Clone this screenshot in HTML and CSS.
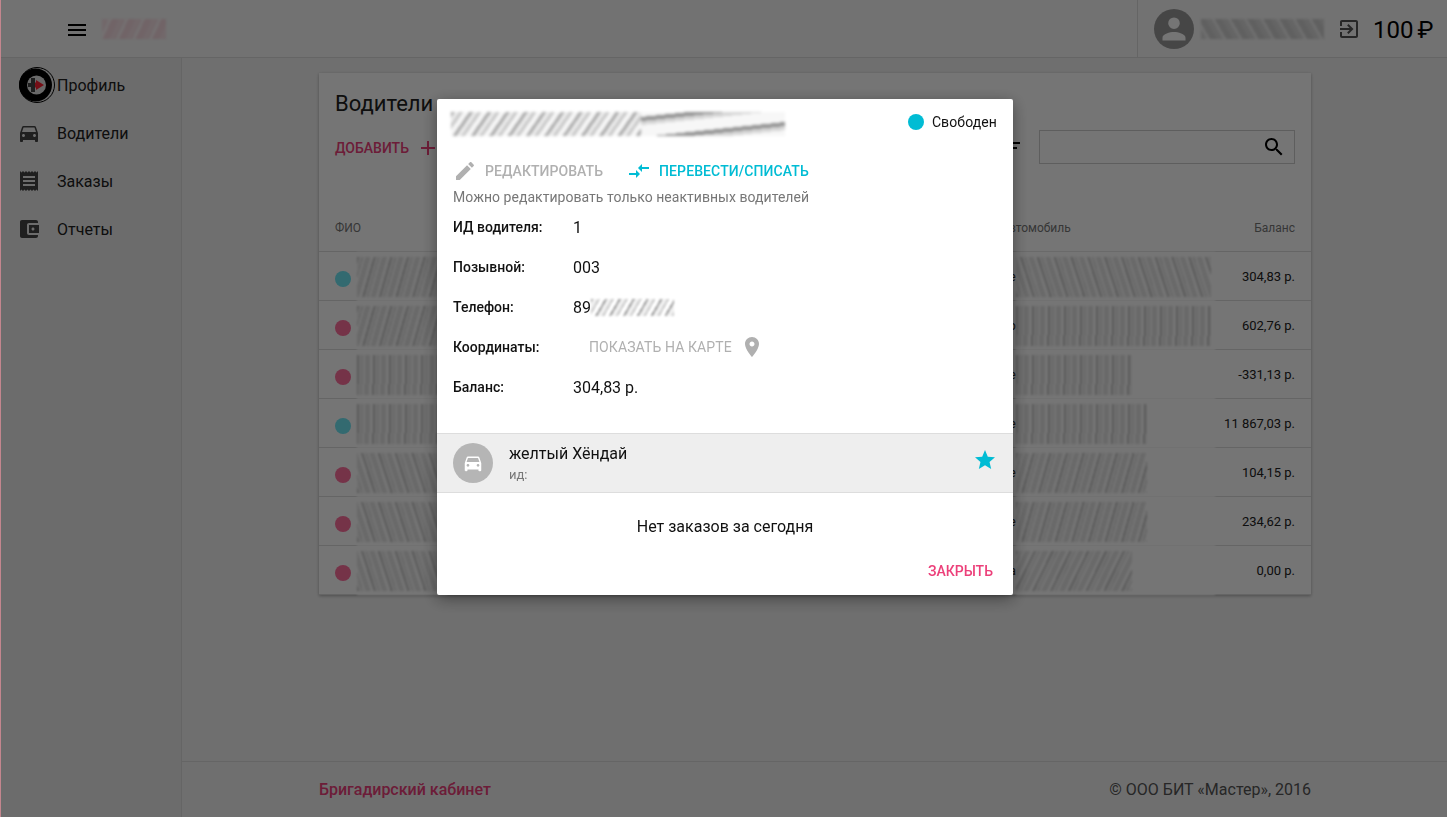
FILE: index.html
```html
<!DOCTYPE html>
<html lang="ru">
<head>
    <meta charset="UTF-8">
    <title>Бригадирский кабинет</title>
    <link rel="stylesheet" href="styles.css">
</head>
<body>
    <div class="page">
        <header class="topbar">
            <div class="topbar-left">
                <svg class="menu-icon" viewBox="0 0 24 24"><path d="M3 18h18v-2H3v2zm0-5h18v-2H3v2zm0-7v2h18V6H3z"/></svg>
                <div class="smear-logo"></div>
            </div>
            <div class="topbar-user">
                <svg class="avatar" viewBox="0 0 40 40"><circle cx="20" cy="20" r="20" fill="#9a9a9a"/><path fill="#fff" d="M20 20a5.800 5.800 0 1 0 0-11.600a5.800 5.800 0 0 0 0 11.600zm0 3c-3.900 0-11.500 1.900-11.500 5.700V31.500h23v-2.800c0-3.800-7.600-5.700-11.500-5.700z"/></svg>
                <div class="smear-user"></div>
                <svg class="exit-icon" viewBox="0 0 24 24"><path d="M10.090 15.590L11.500 17l5-5-5-5-1.410 1.410L12.670 11H3v2h9.670l-2.580 2.590zM19 3H5c-1.110 0-2 .9-2 2v4h2V5h14v14H5v-4H3v4c0 1.100.89 2 2 2h14c1.100 0 2-.9 2-2V5c0-1.100-.9-2-2-2z"/></svg>
                <span class="money">100 ₽</span>
            </div>
        </header>

        <div class="layout">
            <nav class="sidebar">
                <a class="nav-item nav-profile">
                    <svg class="nav-logo" viewBox="0 0 36 36">
                        <circle cx="18" cy="18" r="17.500" fill="none" stroke="#000" stroke-width="1"/>
                        <circle cx="16.500" cy="18" r="16.500" fill="#000"/>
                        <circle cx="17.500" cy="18" r="9.500" fill="#e4e4e4"/>
                        <path fill="#444" d="M12 11h4v14h-4v-5H9v-4h3z"/>
                        <path fill="#ff2030" d="M16 15.500h1V13l8 5-8 5v-2.500h-1z"/>
                    </svg>
                    Профиль
                </a>
                <a class="nav-item">
                    <svg viewBox="0 0 24 24"><path d="M18.920 6.010C18.720 5.420 18.160 5 17.500 5h-11c-.66 0-1.210.42-1.420 1.010L3 12v8c0 .55.45 1 1 1h1c.55 0 1-.45 1-1v-1h12v1c0 .55.45 1 1 1h1c.55 0 1-.45 1-1v-8l-2.080-5.990zM6.500 16c-.83 0-1.500-.67-1.500-1.500S5.670 13 6.500 13s1.500.67 1.500 1.500S7.330 16 6.500 16zm11 0c-.83 0-1.500-.67-1.500-1.500s.67-1.500 1.500-1.500 1.500.67 1.500 1.500-.67 1.500-1.500 1.500zM5 11l1.500-4.500h11L19 11H5z"/></svg>
                    Водители
                </a>
                <a class="nav-item">
                    <svg viewBox="0 0 24 24"><path d="M18 17H6v-2h12v2zm0-4H6v-2h12v2zm0-4H6V7h12v2zM3 22l1.500-1.500L6 22l1.500-1.500L9 22l1.500-1.500L12 22l1.500-1.500L15 22l1.500-1.500L18 22l1.500-1.500L21 22V2l-1.500 1.500L18 2l-1.500 1.500L15 2l-1.500 1.500L12 2l-1.500 1.500L9 2 7.500 3.500 6 2 4.500 3.500 3 2v20z"/></svg>
                    Заказы
                </a>
                <a class="nav-item">
                    <svg viewBox="0 0 24 24"><path d="M21 18v1c0 1.100-.9 2-2 2H5c-1.110 0-2-.9-2-2V5c0-1.100.89-2 2-2h14c1.100 0 2 .9 2 2v1h-9c-1.110 0-2 .9-2 2v8c0 1.100.89 2 2 2h9zm-9-2h10V8H12v8zm4-2.500c-.83 0-1.500-.67-1.500-1.500s.67-1.500 1.500-1.500 1.500.67 1.500 1.500-.67 1.500-1.500 1.500z"/></svg>
                    Отчеты
                </a>
            </nav>

            <div class="content">
                <main class="main">
                    <section class="card">
                        <div class="card-head">
                            <h1>Водители</h1>
                            <div class="card-tools">
                                <a class="add-link">ДОБАВИТЬ
                                    <svg viewBox="0 0 24 24"><path d="M19 13h-6v6h-2v-6H5v-2h6V5h2v6h6v2z"/></svg>
                                </a>
                                <div class="search-group">
                                    <svg class="filter-icon" viewBox="0 0 24 24"><path d="M3 16h6v2H3zM3 6v2h18V6H3zm0 7h15v-2H3v2z"/></svg>
                                    <div class="search-box">
                                        <svg viewBox="0 0 24 24"><path d="M15.500 14h-.79l-.28-.27C15.410 12.590 16 11.110 16 9.500 16 5.910 13.090 3 9.500 3S3 5.910 3 9.500 5.910 16 9.500 16c1.610 0 3.090-.59 4.230-1.570l.27.28v.79l5 4.990L20.490 19l-4.990-5zm-6 0C7.010 14 5 11.990 5 9.500S7.010 5 9.500 5 14 7.010 14 9.500 11.990 14 9.500 14z"/></svg>
                                    </div>
                                </div>
                            </div>
                        </div>
                        <div class="table-head">
                            <span>ФИО</span>
                            <span class="col-car">Автомобиль</span>
                            <span class="col-balance">Баланс</span>
                        </div>
                        <div class="table-row"><i class="dot dot-free"></i><div class="smear smear-name lean-fwd"></div><span class="car-letter">е</span><div class="smear smear-car car-wide lean-back"></div><span class="col-balance">304,83 р.</span></div>
                        <div class="table-row"><i class="dot dot-busy"></i><div class="smear smear-name lean-fwd"></div><span class="car-letter">о</span><div class="smear smear-car car-wide lean-up"></div><span class="col-balance">602,76 р.</span></div>
                        <div class="table-row"><i class="dot dot-busy"></i><div class="smear smear-name lean-up"></div><span class="car-letter">е</span><div class="smear smear-car car-short lean-up"></div><span class="col-balance">-331,13 р.</span></div>
                        <div class="table-row"><i class="dot dot-free"></i><div class="smear smear-name lean-up"></div><span class="car-letter">е</span><div class="smear smear-car car-mid lean-up"></div><span class="col-balance">11 867,03 р.</span></div>
                        <div class="table-row"><i class="dot dot-busy"></i><div class="smear smear-name lean-back"></div><span class="car-letter">е</span><div class="smear smear-car car-mid lean-fwd"></div><span class="col-balance">104,15 р.</span></div>
                        <div class="table-row"><i class="dot dot-busy"></i><div class="smear smear-name lean-back"></div><span class="car-letter">е</span><div class="smear smear-car car-mid lean-fwd"></div><span class="col-balance">234,62 р.</span></div>
                        <div class="table-row"><i class="dot dot-busy"></i><div class="smear smear-name lean-back"></div><span class="car-letter">а</span><div class="smear smear-car car-short lean-far"></div><span class="col-balance">0,00 р.</span></div>
                    </section>
                </main>
                <footer class="footer">
                    <span class="footer-title">Бригадирский кабинет</span>
                    <span>© ООО БИТ «Мастер», 2016</span>
                </footer>
            </div>
        </div>
    </div>

    <div class="overlay"></div>

    <div class="modal">
        <div class="modal-head">
            <div class="smear-title"></div>
            <div class="status"><i class="status-dot"></i>Свободен</div>
        </div>
        <div class="modal-actions">
            <a class="action action-off">
                <svg viewBox="0 0 24 24"><path d="M3 17.250V21h3.750L17.810 9.940l-3.750-3.750L3 17.250zM20.710 7.040c.39-.39.39-1.020 0-1.410l-2.340-2.340c-.39-.39-1.020-.39-1.410 0l-1.830 1.830 3.750 3.750 1.830-1.830z"/></svg>
                РЕДАКТИРОВАТЬ
            </a>
            <a class="action action-on">
                <svg viewBox="0 0 24 24"><path d="M9.010 14H2v2h7.010v3L13 15l-3.990-4v3zm5.980-1v-3H22V8h-7.010V5L11 9l3.990 4z"/></svg>
                ПЕРЕВЕСТИ/СПИСАТЬ
            </a>
        </div>
        <p class="hint">Можно редактировать только неактивных водителей</p>
        <dl class="info">
            <div class="info-row"><dt>ИД водителя:</dt><dd>1</dd></div>
            <div class="info-row"><dt>Позывной:</dt><dd>003</dd></div>
            <div class="info-row"><dt>Телефон:</dt><dd class="phone">89<div class="smear-phone"></div></dd></div>
            <div class="info-row"><dt>Координаты:</dt><dd class="map-link">ПОКАЗАТЬ НА КАРТЕ
                <svg viewBox="0 0 24 24"><path d="M12 2C8.130 2 5 5.130 5 9c0 5.250 7 13 7 13s7-7.750 7-13c0-3.870-3.130-7-7-7zm0 9.500c-1.380 0-2.500-1.120-2.500-2.500s1.120-2.500 2.500-2.500 2.500 1.120 2.500 2.500-1.120 2.500-2.500 2.500z"/></svg>
            </dd></div>
            <div class="info-row"><dt>Баланс:</dt><dd>304,83 р.</dd></div>
        </dl>
        <div class="car-row">
            <div class="car-avatar">
                <svg viewBox="0 0 24 24"><path d="M18.920 6.010C18.720 5.420 18.160 5 17.500 5h-11c-.66 0-1.210.42-1.420 1.010L3 12v8c0 .55.45 1 1 1h1c.55 0 1-.45 1-1v-1h12v1c0 .55.45 1 1 1h1c.55 0 1-.45 1-1v-8l-2.080-5.990zM6.500 16c-.83 0-1.500-.67-1.500-1.500S5.670 13 6.500 13s1.500.67 1.500 1.500S7.330 16 6.500 16zm11 0c-.83 0-1.500-.67-1.500-1.500s.67-1.500 1.500-1.500 1.500.67 1.500 1.500-.67 1.500-1.500 1.500zM5 11l1.500-4.500h11L19 11H5z"/></svg>
            </div>
            <div class="car-text">
                <div class="car-name">желтый Хёндай</div>
                <div class="car-id">ид:</div>
            </div>
            <svg class="star" viewBox="0 0 24 24"><path d="M12 17.270L18.180 21l-1.640-7.030L22 9.240l-7.190-.61L12 2 9.190 8.630 2 9.240l5.460 4.730L5.820 21z"/></svg>
        </div>
        <p class="no-orders">Нет заказов за сегодня</p>
        <div class="modal-foot"><a class="close-btn">ЗАКРЫТЬ</a></div>
    </div>
</body>
</html>
```

FILE: styles.css
```css
* {
    box-sizing: border-box;
}
html, body {
    height: 100%;
}
body {
    margin: 0;
    font-family: Roboto, "Liberation Sans", sans-serif;
    color: #212121;
    background: #f2f2f2;
    overflow: hidden;
}
.page {
    display: flex;
    flex-direction: column;
    height: 817px;
    border-left: 1px solid #c4868e;
}
.overlay {
    position: fixed;
    inset: 0 0 0 1px;
    background: rgba(0, 0, 0, 0.54);
}

/* blurred-out personal data */
.smear {
    --lean: 105deg;
    --smear-w: 100%;
    flex: none;
    align-self: stretch;
    margin-bottom: -1px;
    filter: blur(1px);
    background-color: #fff;
    background-image: repeating-linear-gradient(var(--lean), rgba(0,0,0,.22) 0 2px, rgba(0,0,0,.05) 2px 5px, rgba(0,0,0,.16) 5px 6px, transparent 6px 8px, rgba(0,0,0,.1) 8px 13px, transparent 13px 16px);
    background-repeat: no-repeat;
    background-position: 0 center;
    background-size: var(--smear-w) 40px;
}
.lean-fwd { --lean: 106deg; }
.lean-far { --lean: 116deg; }
.lean-up { --lean: 91deg; }
.lean-back { --lean: 72deg; }
.smear-name {
    width: 90px;
    margin-left: 6px;
}
.smear-car {
    width: 199px;
}
.car-wide { --smear-w: 195px; }
.car-mid { --smear-w: 131px; }
.car-short { --smear-w: 116px; }
.car-letter {
    flex: none;
    width: 569px;
    text-align: right;
}
.smear-logo {
    width: 64px;
    height: 20px;
    filter: blur(0.8px);
    background: repeating-linear-gradient(115deg, #f8e2e7 0 6px, #fdf3f5 6px 9px, #f6dae0 9px 15px);
}
.smear-user {
    width: 123px;
    height: 20px;
    filter: blur(0.8px);
    background: repeating-linear-gradient(60deg, #dcdcdc 0 5px, #f0f0f0 5px 8px, #d2d2d2 8px 14px);
}
.smear-title {
    width: 334px;
    height: 24px;
    margin-top: 4px;
    filter: blur(1.6px);
    background-image:
        repeating-linear-gradient(125deg, rgba(0,0,0,.34) 0 3px, rgba(0,0,0,.08) 3px 7px, rgba(0,0,0,.22) 7px 10px, rgba(0,0,0,.03) 10px 15px),
        repeating-linear-gradient(174deg, rgba(0,0,0,.03) 0 5px, rgba(0,0,0,.42) 5px 9px, rgba(0,0,0,.16) 9px 13px, rgba(0,0,0,.03) 13px 20px);
    background-repeat: no-repeat;
    background-size: 190px 100%, 144px 100%;
    background-position: left center, right center;
}
.smear-phone {
    width: 83px;
    height: 17px;
    filter: blur(0.9px);
    background: repeating-linear-gradient(120deg, rgba(0,0,0,.36) 0 2px, rgba(0,0,0,.06) 2px 6px, rgba(0,0,0,.2) 6px 8px, transparent 8px 12px);
}

/* top bar */
.topbar {
    display: flex;
    flex: none;
    justify-content: space-between;
    height: 58px;
    background: #f8f8f8;
    border-bottom: 1px solid #ddd;
}
.topbar-left {
    display: flex;
    align-items: center;
    gap: 13px;
    padding-left: 64px;
}
.menu-icon {
    width: 24px;
    height: 24px;
    margin-top: 3px;
    fill: #000;
}
.topbar-user {
    display: flex;
    align-items: center;
    width: 310px;
    padding-left: 16px;
    border-left: 1px solid #ddd;
}
.avatar {
    width: 40px;
    height: 40px;
    margin-right: 7px;
}
.exit-icon {
    width: 24px;
    height: 24px;
    margin-left: 13px;
    fill: #555;
}
.money {
    margin: 2px 0 0 12px;
    font-size: 24px;
    word-spacing: -2px;
    color: #000;
}

.layout {
    display: flex;
    flex: 1;
    min-height: 0;
}
.sidebar {
    flex: none;
    width: 181px;
    padding-top: 3px;
    background: #ececec;
    border-right: 1px solid #ddd;
}
.nav-item {
    position: relative;
    display: flex;
    align-items: center;
    gap: 18px;
    height: 48px;
    padding-left: 18px;
    font-size: 16px;
    color: #212121;
}
.nav-item svg {
    width: 20px;
    height: 20px;
    fill: #444;
    transform: scale(1.2);
}
.nav-profile {
    gap: 2px;
}
.nav-item .nav-logo {
    width: 36px;
    height: 36px;
    transform: none;
}

.content {
    display: flex;
    flex: 1;
    flex-direction: column;
    min-width: 0;
}
.main {
    flex: 1;
    padding: 15px 136px 0 137px;
}
.card {
    background: #fff;
    box-shadow: 0 1px 3px rgba(0, 0, 0, 0.3);
}
.card-head {
    height: 145px;
    padding: 18px 16px 0;
}
.card-head h1 {
    margin: 0;
    font-size: 22px;
    font-weight: 400;
    line-height: 26px;
    color: #212121;
}
.card-tools {
    display: flex;
    justify-content: space-between;
    align-items: center;
    margin-top: 13px;
}
.add-link {
    display: flex;
    align-items: center;
    gap: 7px;
    margin-top: 2px;
    font-size: 14px;
    font-weight: 500;
    color: #ec407a;
}
.add-link svg {
    width: 24px;
    height: 24px;
    fill: #ec407a;
}
.search-group {
    display: flex;
    align-items: center;
    gap: 16px;
}
.filter-icon {
    width: 24px;
    height: 24px;
    margin-top: 2px;
}
.search-box {
    display: flex;
    justify-content: flex-end;
    align-items: center;
    width: 256px;
    height: 34px;
    padding-right: 8px;
    border: 1px solid #ccc;
}
.search-box svg {
    width: 24px;
    height: 24px;
    fill: #000;
}
.table-head {
    display: flex;
    height: 34px;
    padding: 3px 16px 0;
    border-bottom: 1px solid #ddd;
    font-size: 12px;
    line-height: 14px;
    color: #777;
}
.col-car {
    margin-left: 640px;
}
.col-balance {
    margin-left: auto;
}
.table-row {
    display: flex;
    align-items: center;
    height: 49px;
    padding: 0 16px;
    border-bottom: 1px solid #ddd;
    font-size: 13px;
}
.dot {
    flex: none;
    width: 16px;
    height: 16px;
    margin-top: 5px;
    border-radius: 50%;
}
.dot-free { background: #6fe6f5; }
.dot-busy { background: #ff6f9e; }
.footer {
    display: flex;
    flex: none;
    justify-content: space-between;
    align-items: center;
    height: 56px;
    padding: 0 136px 0 137px;
    border-top: 1px solid #ddd;
    font-size: 16px;
    color: #555;
}
.footer-title {
    font-weight: 500;
    color: #ec407a;
}

/* driver dialog */
.modal {
    position: fixed;
    top: 99px;
    left: 437px;
    width: 576px;
    height: 496px;
    background: #fff;
    border-radius: 2px;
    box-shadow: 0 4px 16px rgba(0, 0, 0, 0.4);
    font-size: 14px;
    color: #111;
}
.modal-head {
    display: flex;
    justify-content: space-between;
    align-items: center;
    height: 46px;
    padding: 0 16px 0 14px;
}
.status {
    display: flex;
    align-items: center;
    gap: 8px;
    font-size: 14px;
    letter-spacing: 0.1px;
}
.status-dot {
    width: 16px;
    height: 16px;
    border-radius: 50%;
    background: #00bcd4;
}
.modal-actions {
    display: flex;
    align-items: center;
    gap: 24px;
    height: 26px;
    margin: 13px 0 0 16px;
}
.action {
    display: flex;
    align-items: center;
    gap: 8px;
    font-size: 14px;
    font-weight: 500;
}
.action svg {
    width: 24px;
    height: 24px;
}
.action-off {
    color: #b0b0b0;
    letter-spacing: 0.05px;
}
.action-off svg {
    fill: #b0b0b0;
}
.action-on {
    color: #00bcd4;
    letter-spacing: 0.1px;
}
.action-on svg {
    fill: #00bcd4;
}
.hint {
    margin: 1px 0 0 16px;
    font-size: 14px;
    line-height: 24px;
    letter-spacing: 0.04px;
    color: #777;
}
.info {
    margin: -2px 0 0;
    padding: 0 16px;
}
.info-row {
    display: flex;
    align-items: center;
    height: 40px;
}
.info dt {
    width: 120px;
    font-size: 14px;
    font-weight: 500;
}
.info dd {
    display: flex;
    align-items: center;
    margin: 0;
    font-size: 16px;
}
.info .map-link {
    margin-left: 16px;
    font-size: 14px;
    letter-spacing: 0.1px;
    color: #b0b0b0;
}
.map-link svg {
    width: 24px;
    height: 24px;
    margin-left: 8px;
    fill: #b0b0b0;
}
.car-row {
    display: flex;
    align-items: center;
    height: 60px;
    margin-top: 26px;
    padding: 0 16px;
    background: #eee;
    border-top: 1px solid #ddd;
    border-bottom: 1px solid #ddd;
}
.car-avatar {
    display: flex;
    justify-content: center;
    align-items: center;
    width: 40px;
    height: 40px;
    border-radius: 50%;
    background: #b5b5b5;
}
.car-avatar svg {
    width: 22px;
    height: 22px;
    fill: #fff;
}
.car-text {
    flex: 1;
    margin-left: 16px;
}
.car-name {
    font-size: 16px;
    line-height: 20px;
}
.car-id {
    margin-top: 3px;
    font-size: 13px;
    color: #777;
}
.star {
    width: 24px;
    height: 24px;
    margin-top: -6px;
    fill: #00bcd4;
}
.no-orders {
    margin: 0;
    padding-top: 24px;
    font-size: 16px;
    line-height: 20px;
    text-align: center;
}
.modal-foot {
    display: flex;
    justify-content: flex-end;
    padding: 26px 20px 0 0;
}
.close-btn {
    font-size: 14px;
    font-weight: 500;
    color: #ec407a;
}
```
